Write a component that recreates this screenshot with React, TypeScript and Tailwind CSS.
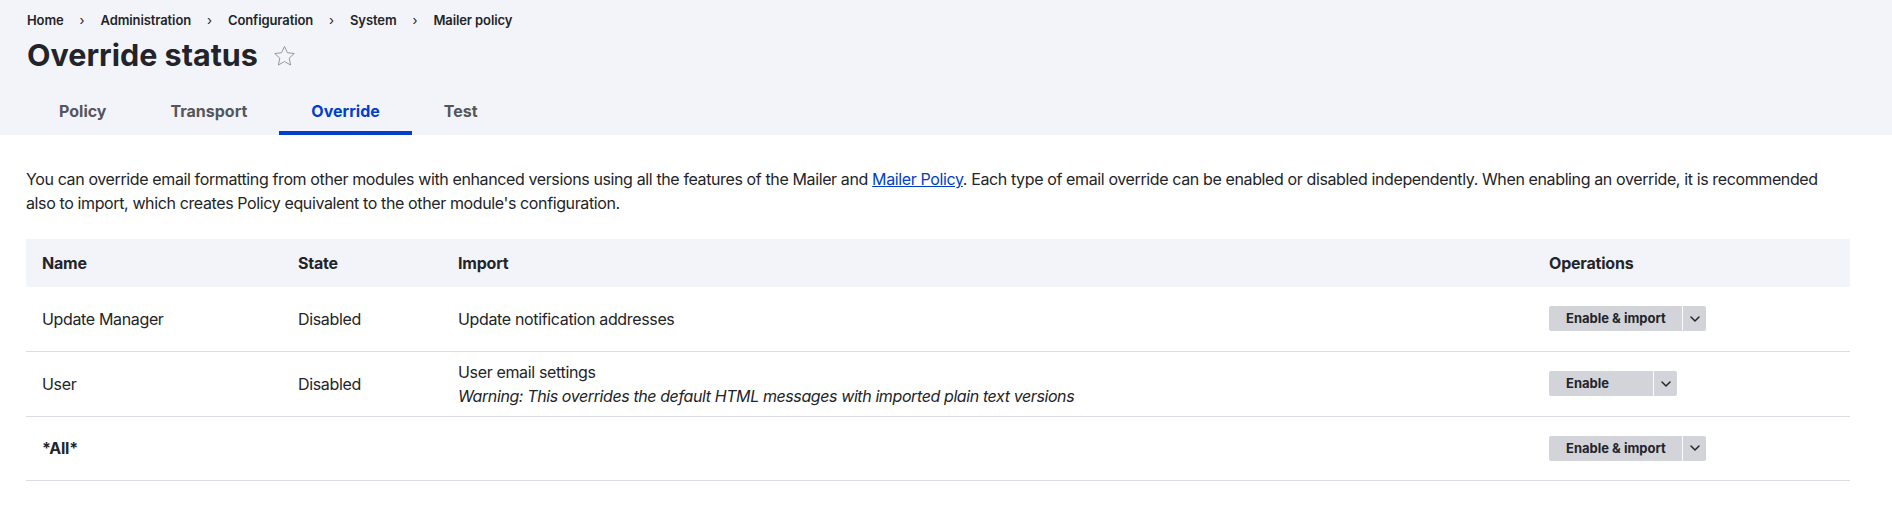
import React from "react";

const font = { fontFamily: "Inter, 'Noto Sans', sans-serif" };

function Chevron() {
  return (
    <svg width="10" height="6" viewBox="0 0 10 6" fill="none">
      <path d="M1 1l4 4 4-4" stroke="#232429" strokeWidth="1.5" strokeLinecap="round" strokeLinejoin="round" />
    </svg>
  );
}

function DropButton({ label, w }: { label: string; w: string }) {
  return (
    <div className="flex h-[25px] rounded-[2px] bg-[#d3d4d9] text-[#232429]">
      <div className={`${w} flex items-center pl-[17px] text-[13px] font-bold leading-none tracking-normal`}>{label}</div>
      <div className="w-px bg-white/90" />
      <div className="flex w-[23px] items-center justify-center">
        <Chevron />
      </div>
    </div>
  );
}

function Star() {
  return (
    <svg width="23" height="22" viewBox="0 0 24 23" fill="none" className="ml-[15px] mt-[2px]">
      <path
        d="M12 1.5l3.1 6.6 7.1.8-5.3 4.9 1.5 7.1L12 17.3l-6.4 3.6 1.5-7.1L1.8 8.9l7.1-.8L12 1.5z"
        stroke="#8f929b"
        strokeWidth="1"
        strokeLinejoin="round"
      />
    </svg>
  );
}

export default function App() {
  const crumbs = ["Home", "Administration", "Configuration", "System", "Mailer policy"];
  const tabs = ["Policy", "Transport", "Override", "Test"];
  return (
    <div className="min-h-[508px] bg-white text-[#232429]" style={font}>
      <div className="bg-[#f3f4f9] pl-[27px] pt-[10px]">
        <nav className="flex h-[22px] items-center text-[13px] font-semibold tracking-[-0.1px] text-[#232429]">
          {crumbs.map((c, i) => (
            <React.Fragment key={c}>
              {i > 0 && <span className="px-[16px] text-[13px] font-normal">›</span>}
              <span>{c}</span>
            </React.Fragment>
          ))}
        </nav>
        <div className="mt-[5px] flex h-[36px] items-center">
          <h1 className="text-[30.5px] font-bold leading-[36px] text-[#232429]">Override status</h1>
          <Star />
        </div>
        <div className="mt-[14px] flex h-[48px]">
          {tabs.map((t) => {
            const active = t === "Override";
            return (
              <div
                key={t}
                className={`relative flex items-center px-[32px] text-[16px] font-bold ${
                  active ? "text-[#003ecc]" : "text-[#55565b]"
                }`}
              >
                {t}
                {active && <div className="absolute bottom-0 left-0 right-0 h-[4px] bg-[#003ecc]" />}
              </div>
            );
          })}
        </div>
      </div>

      <div className="pl-[26px] pr-[42px]">
        <p className="mt-[32px] text-[16px] leading-[24px] tracking-[-0.38px] text-[#232429]">
          You can override email formatting from other modules with enhanced versions using all the features of the Mailer and{" "}
          <a className="text-[#003ecc] underline">Mailer Policy</a>. Each type of email override can be enabled or disabled
          independently. When enabling an override, it is recommended
          <br />
          also to import, which creates Policy equivalent to the other module's configuration.
        </p>

        <table className="mt-[24px] w-full border-collapse text-left text-[16px] leading-[24px] tracking-[-0.35px]">
          <colgroup>
            <col className="w-[256px]" />
            <col className="w-[160px]" />
            <col />
            <col className="w-[317px]" />
          </colgroup>
          <thead>
            <tr className="h-[48px] bg-[#f3f4f9]">
              <th className="px-4 font-bold tracking-[-0.2px]">Name</th>
              <th className="px-4 font-bold tracking-[-0.2px]">State</th>
              <th className="px-4 font-bold tracking-[-0.2px]">Import</th>
              <th className="px-4 font-bold tracking-[-0.2px]">Operations</th>
            </tr>
          </thead>
          <tbody>
            <tr className="h-[64px] border-b border-[#dcdde2]">
              <td className="px-4 py-2">Update Manager</td>
              <td className="px-4 py-2">Disabled</td>
              <td className="px-4 py-2">Update notification addresses</td>
              <td className="px-4 py-2">
                <div className="flex">
                  <DropButton label="Enable & import" w="w-[133px]" />
                </div>
              </td>
            </tr>
            <tr className="h-[65px] border-b border-[#dcdde2]">
              <td className="px-4 py-2">User</td>
              <td className="px-4 py-2">Disabled</td>
              <td className="px-4 py-2">
                <div>User email settings</div>
                <div className="italic tracking-[-0.4px]">Warning: This overrides the default HTML messages with imported plain text versions</div>
              </td>
              <td className="px-4 py-2">
                <div className="flex">
                  <DropButton label="Enable" w="w-[104px]" />
                </div>
              </td>
            </tr>
            <tr className="h-[64px] border-b border-[#dcdde2]">
              <td className="px-4 py-2 font-bold tracking-[-0.2px]">*All*</td>
              <td className="px-4 py-2"></td>
              <td className="px-4 py-2"></td>
              <td className="px-4 py-2">
                <div className="flex">
                  <DropButton label="Enable & import" w="w-[133px]" />
                </div>
              </td>
            </tr>
          </tbody>
        </table>
      </div>
    </div>
  );
}
